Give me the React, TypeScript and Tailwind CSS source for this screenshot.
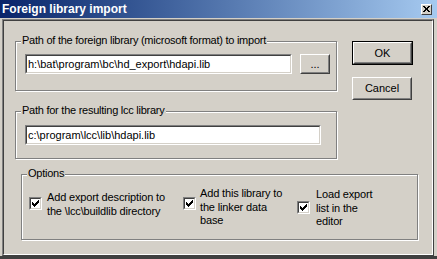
import { ReactNode } from "react";

const font = { fontFamily: '"Liberation Sans", Arial, sans-serif' };

const Edit: React.FC<{ value: string; width: string }> = ({ value, width }) => (
  <div className={`${width} h-[20px] border border-t-[#808080] border-l-[#808080] border-r-white border-b-white`}>
    <div className="h-full border border-t-[#404040] border-l-[#404040] border-r-[#d4d0c8] border-b-[#d4d0c8] bg-white flex items-center pl-[1px] text-[11px] text-black whitespace-nowrap overflow-hidden">
      {value}
    </div>
  </div>
);

const Button: React.FC<{ label: string; className: string; isDefault?: boolean }> = ({ label, className, isDefault }) => {
  const inner = (
    <div className="h-full border border-t-white border-l-white border-r-[#404040] border-b-[#404040]">
      <div className="h-full border border-t-[#d4d0c8] border-l-[#d4d0c8] border-r-[#808080] border-b-[#808080] flex items-center justify-center text-[11px] text-black">
        {label}
      </div>
    </div>
  );
  return isDefault ? (
    <div className={`${className} border border-black`}>{inner}</div>
  ) : (
    <div className={className}>{inner}</div>
  );
};

const Group: React.FC<{ label: string; className: string; children: ReactNode }> = ({ label, className, children }) => (
  <div className={`relative border border-[#808080] shadow-[inset_1px_1px_0_#fff,1px_1px_0_#fff] ${className}`}>
    <span className="absolute left-[5px] top-[-8px] bg-[#d4d0c8] px-[1px] text-[11px] leading-[13px] tracking-[-0.25px] text-black whitespace-nowrap">
      {label}
    </span>
    {children}
  </div>
);

const CheckBox = () => (
  <div className="w-[13px] h-[13px] shrink-0 border border-t-[#808080] border-l-[#808080] border-r-white border-b-white">
    <div className="h-full border border-t-[#404040] border-l-[#404040] border-r-[#d4d0c8] border-b-[#d4d0c8] bg-white flex items-center justify-center">
      <svg width="7" height="7" viewBox="0 0 7 7" shapeRendering="crispEdges">
        <path d="M0 2h1v3h-1zM1 3h1v3h-1zM2 4h1v3h-1zM3 3h1v3h-1zM4 2h1v3h-1zM5 1h1v3h-1zM6 0h1v3h-1z" fill="#000" />
      </svg>
    </div>
  </div>
);

const Option: React.FC<{ lines: string[]; boxTop: string; textTop: string; className?: string }> = ({ lines, boxTop, textTop, className }) => (
  <div className={`flex items-start ${className ?? ""}`}>
    <div className={boxTop}>
      <CheckBox />
    </div>
    <div className={`${textTop} text-[11px] leading-[13.5px] tracking-[-0.15px] text-black`}>
      {lines.map((l) => (
        <div key={l} className="whitespace-nowrap">{l}</div>
      ))}
    </div>
  </div>
);

export default function App() {
  return (
    <div className="w-[437px] h-[259px] bg-[#d4d0c8] overflow-hidden flex flex-col" style={font}>
      <div className="h-[18px] shrink-0 flex items-center justify-between pl-[2px] pr-[5px] bg-gradient-to-r from-[#0a246a] to-[#a6caf0]">
        <span className="text-white font-bold text-[12px] leading-none">Foreign library import</span>
        <div className="w-[11px] h-[11px] bg-[#d4d0c8] border-t border-l border-white border-r border-b border-r-[#404040] border-b-[#404040] flex items-center justify-center">
          <svg width="7" height="6" viewBox="0 0 7 6" shapeRendering="crispEdges">
            <path d="M0 0h2v1h-2zM5 0h2v1h-2zM1 1h2v1h-2zM4 1h2v1h-2zM2 2h3v2h-3zM1 4h2v1h-2zM4 4h2v1h-2zM0 5h2v1h-2zM5 5h2v1h-2z" fill="#000" />
          </svg>
        </div>
      </div>
      <div className="h-[1px] shrink-0" />
      <div className="ml-[2px] w-[432px] h-[237px] shrink-0 border border-t-[#808080] border-l-[#808080] border-r-[#404040] border-b-[#404040]">
        <div className="h-full border border-t-[#404040] border-l-[#404040] border-r-white border-b-white flex flex-col">
          <div className="flex items-start pl-[11px] pt-[20px]">
            <div className="flex flex-col gap-[20px]">
              <Group label="Path of the foreign library (microsoft format) to import" className="w-[322px] h-[50px] pt-[12px] pl-[9px]">
                <div className="flex gap-[8px]">
                  <Edit value="h:\bat\program\bc\hd_export\hdapi.lib" width="w-[267px]" />
                  <Button label="..." className="w-[30px] h-[20px]" />
                </div>
              </Group>
              <Group label="Path for the resulting lcc library" className="w-[322px] h-[48px] pt-[13px] pl-[9px]">
                <Edit value="c:\program\lcc\lib\hdapi.lib" width="w-[296px]" />
              </Group>
            </div>
            <div className="ml-[15px] flex flex-col gap-[12px]">
              <Button label="OK" className="w-[61px] h-[24px]" isDefault />
              <Button label="Cancel" className="w-[60px] h-[23px]" />
            </div>
          </div>
          <Group label="Options" className="ml-[17px] mt-[15px] w-[397px] h-[66px] flex pl-[7px]">
            <Option lines={["Add export description to", "the \\lcc\\buildlib directory"]} boxTop="mt-[22px]" textTop="mt-[16px] ml-[5px]" className="w-[154px]" />
            <Option lines={["Add this library to", "the linker data", "base"]} boxTop="mt-[22px]" textTop="mt-[12px] ml-[4px]" className="w-[114px]" />
            <Option lines={["Load export", "list in the", "editor"]} boxTop="mt-[26px]" textTop="mt-[13px] ml-[6px]" />
          </Group>
        </div>
      </div>
      <div className="flex-1 bg-[#404040]" />
    </div>
  );
}
